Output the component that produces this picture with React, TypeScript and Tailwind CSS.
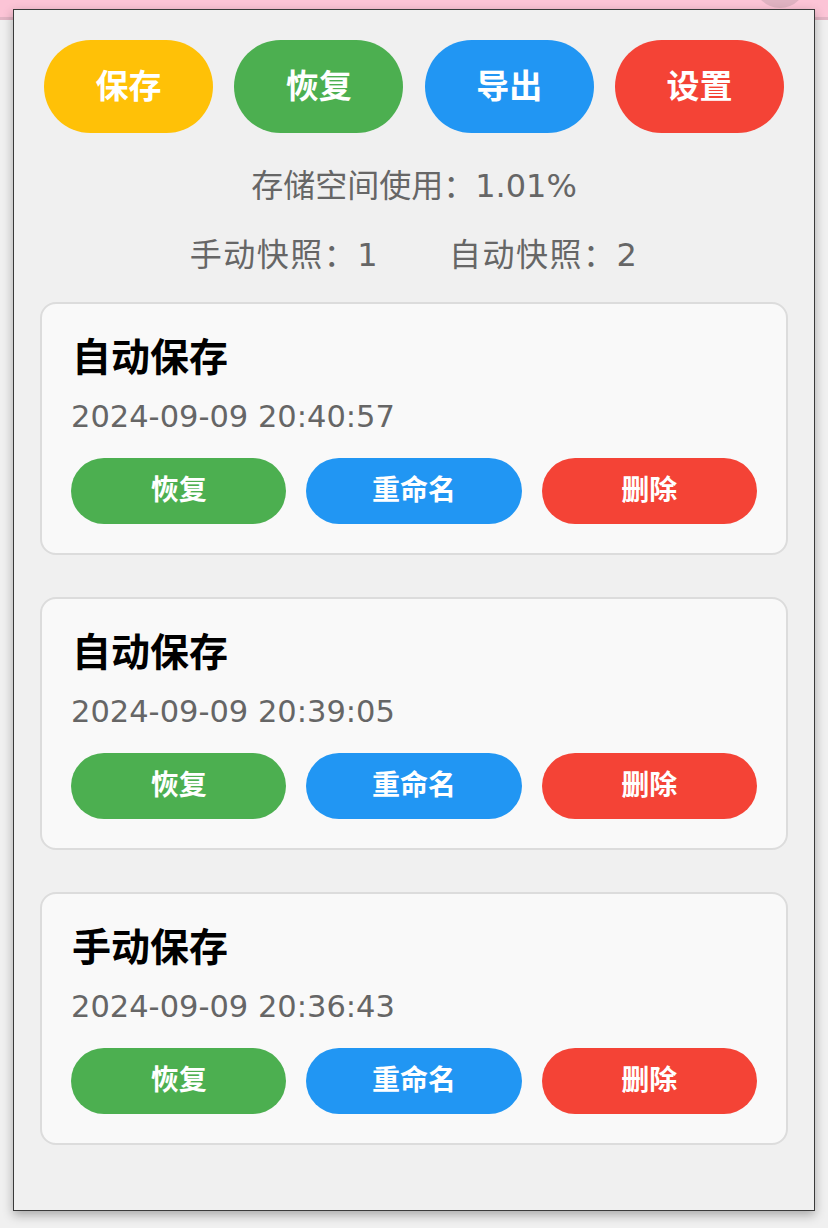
const snapshots = [
  { name: "自动保存", time: "2024-09-09 20:40:57" },
  { name: "自动保存", time: "2024-09-09 20:39:05" },
  { name: "手动保存", time: "2024-09-09 20:36:43" },
];

const topActions = [
  { label: "保存", color: "bg-[#FFC107]" },
  { label: "恢复", color: "bg-[#4CAF50]" },
  { label: "导出", color: "bg-[#2196F3]" },
  { label: "设置", color: "bg-[#F44336]" },
];

export default function App() {
  return (
    <div
      className="relative min-h-screen bg-[#f0f0f0]"
      style={{ fontFamily: '"DejaVu Sans", "Noto Sans CJK SC", sans-serif' }}
    >
      {/* page behind the popup */}
      <div className="relative h-[20px] overflow-hidden border-b-[3px] border-[#e2b4c4] bg-[#fcc4d6]">
        <div className="absolute right-[22px] top-[-44px] h-[52px] w-[52px] rounded-full bg-[#dfb2c1]" />
      </div>

      {/* popup panel */}
      <div className="absolute left-[13px] top-[9px] h-[1202px] w-[802px] border border-[#3a3a3a] bg-[#f0f0f0] px-[26px] pt-[30px] shadow-[0_4px_10px_rgba(0,0,0,0.3)]">
        <div className="flex justify-between px-[4px]">
          {topActions.map((a) => (
            <button
              key={a.label}
              className={`h-[93px] w-[169px] rounded-full ${a.color} text-[33px] font-bold leading-none text-white`}
            >
              {a.label}
            </button>
          ))}
        </div>

        <p className="mt-[33px] text-center text-[32px] leading-[40px] text-[#666]">
          存储空间使用：1.01%
        </p>
        <div className="mt-[29px] flex justify-center gap-[70px] text-[32px] leading-[40px] tracking-[1.5px] text-[#666]">
          <span>手动快照：1</span>
          <span>自动快照：2</span>
        </div>

        <div className="mt-[27px] flex flex-col gap-[42px]">
          {snapshots.map((s, i) => (
            <div
              key={i}
              className="rounded-[16px] border-2 border-[#dcdcdc] bg-[#f9f9f9] px-[29px] pb-[29px] pt-[30px]"
            >
              <h3 className="pl-[1px] text-[39px] font-bold leading-[48px] text-black">
                {s.name}
              </h3>
              <p className="mt-[15px] text-[30.5px] leading-[40px] text-[#666]">
                {s.time}
              </p>
              <div className="mt-[21px] grid grid-cols-3 gap-[20px]">
                <button className="h-[66px] rounded-full bg-[#4CAF50] text-[28px] font-bold text-white">
                  恢复
                </button>
                <button className="h-[66px] rounded-full bg-[#2196F3] text-[28px] font-bold text-white">
                  重命名
                </button>
                <button className="h-[66px] rounded-full bg-[#F44336] text-[28px] font-bold text-white">
                  删除
                </button>
              </div>
            </div>
          ))}
        </div>
      </div>
    </div>
  );
}
